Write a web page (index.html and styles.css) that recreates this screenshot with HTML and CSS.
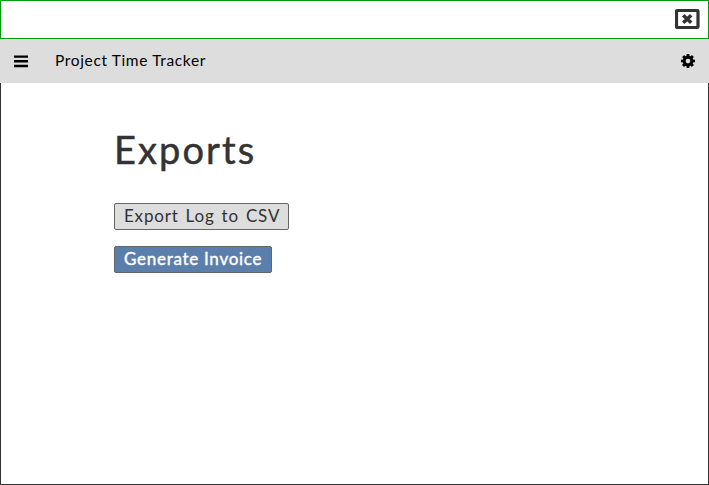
FILE: index.html
```html
<!DOCTYPE html>
<html lang="en">
<head>
<meta charset="utf-8">
<title>Project Time Tracker</title>
<link rel="stylesheet" href="styles.css">
</head>
<body>
<div class="window">
  <header class="titlebar">
    <svg class="close" width="26" height="22" viewBox="0 0 26 22">
      <rect x="1.5" y="2.5" width="21.500" height="17" rx="0.800" fill="none" stroke="#333" stroke-width="3.200"/>
      <path d="M8.200 7.200l8 7.600M16.200 7.200l-8 7.600" stroke="#333" stroke-width="3.500"/>
    </svg>
  </header>
  <nav class="toolbar">
    <svg class="menu" width="14" height="14" viewBox="0 0 14 14"><path d="M0 2.600h14M0 7.300h14M0 12h14" stroke="#000" stroke-width="2.400"/></svg>
    <span class="app-name">Project Time Tracker</span>
    <svg class="gear" width="14" height="14" viewBox="0 0 1536 1536"><path d="M1024 768q0-106-75-181t-181-75-181 75-75 181 75 181 181 75 181-75 75-181zm512-109v222q0 12-8 23t-20 13l-185 28q-19 54-39 91 35 50 107 138 10 12 10 25t-9 23q-27 37-99 108t-94 71q-12 0-26-9l-138-108q-44 23-91 38-16 136-29 186-7 28-36 28H657q-14 0-24.500-8.500T621 1506l-28-184q-49-16-90-37l-141 107q-10 9-25 9-14 0-25-11-126-114-165-168-7-10-7-23 0-12 8-23 15-21 51-66.500t54-70.500q-27-50-41-99L29 913q-13-2-21-12.500T0 877V655q0-12 8-23t19-13l186-28q14-46 39-92-40-57-107-138-10-12-10-24 0-10 9-23 26-36 98.500-107.500T337 135q13 0 26 10l138 107q44-23 91-38 16-136 29-186 7-28 36-28h222q14 0 24.500 8.500T915 30l28 184q49 16 90 37l142-107q9-9 24-9 13 0 25 10 129 119 165 170 7 8 7 22 0 12-8 23-15 21-51 66.500t-54 70.500q26 50 41 98l183 28q13 2 21 12.500t8 23.500z"/></svg>
  </nav>
  <main class="content">
    <h1 class="heading">Exports</h1>
    <button class="button export">Export Log to CSV</button>
    <button class="button primary">Generate Invoice</button>
  </main>
</div>
</body>
</html>
```
FILE: styles.css
```css
* { box-sizing: border-box; }
body { margin: 0; font-family: Lato, "Open Sans", sans-serif; }
svg { display: block; flex: none; }
.window { height: 485px; display: flex; flex-direction: column; background: #fff; }
.titlebar { height: 39px; border: 1px solid #009e0f; display: flex; justify-content: flex-end; align-items: flex-start; padding: 7px 7px 0 0; }
.toolbar { height: 44px; background: #ddd; color: #000; display: flex; align-items: center; padding: 0 14px; }
.app-name { margin: -2px auto 0 27px; font-size: 15.5px; line-height: 20px; letter-spacing: 0.64px; white-space: nowrap; }
.content { flex: 1; border: 1px solid #333; border-top: 0; padding: 42px 113px 0; display: flex; flex-direction: column; align-items: flex-start; }
.heading { margin: 0 0 30px; font-size: 38px; line-height: 48px; font-weight: 400; letter-spacing: 2.1px; -webkit-text-stroke: 0.5px; color: #333; }
.button { height: 27px; margin: 0 0 16px; padding: 0 0 1px 9px; border: 1px solid #666; border-radius: 2px; font-family: inherit; font-size: 17px; line-height: 24px; text-align: left; white-space: nowrap; }
.export { width: 175px; background: #ddd; color: #333; letter-spacing: 0.8px; word-spacing: 1.9px; }
.primary { width: 158px; background: #5b7fad; color: #fff; letter-spacing: 0.72px; -webkit-text-stroke: 0.4px; }
```
